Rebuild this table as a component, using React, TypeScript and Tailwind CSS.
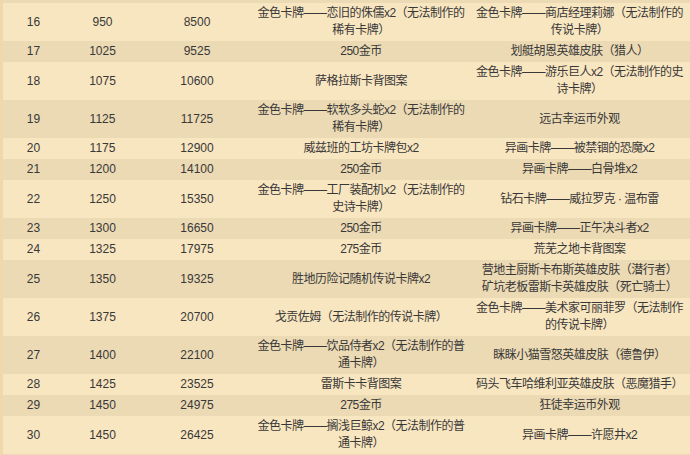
type Row = {
    level: number
    exp: number
    total: number
    free: string[]
    paid: string[]
}

const rows: Row[] = [
    { level: 16, exp: 950, total: 8500, free: ["金色卡牌——恋旧的侏儒x2（无法制作的", "稀有卡牌）"], paid: ["金色卡牌——商店经理莉娜（无法制作的", "传说卡牌）"] },
    { level: 17, exp: 1025, total: 9525, free: ["250金币"], paid: ["划艇胡恩英雄皮肤（猎人）"] },
    { level: 18, exp: 1075, total: 10600, free: ["萨格拉斯卡背图案"], paid: ["金色卡牌——游乐巨人x2（无法制作的史", "诗卡牌）"] },
    { level: 19, exp: 1125, total: 11725, free: ["金色卡牌——软软多头蛇x2（无法制作的", "稀有卡牌）"], paid: ["远古幸运币外观"] },
    { level: 20, exp: 1175, total: 12900, free: ["威兹班的工坊卡牌包x2"], paid: ["异画卡牌——被禁锢的恐魔x2"] },
    { level: 21, exp: 1200, total: 14100, free: ["250金币"], paid: ["异画卡牌——白骨堆x2"] },
    { level: 22, exp: 1250, total: 15350, free: ["金色卡牌——工厂装配机x2（无法制作的", "史诗卡牌）"], paid: ["钻石卡牌——威拉罗克 · 温布雷"] },
    { level: 23, exp: 1300, total: 16650, free: ["250金币"], paid: ["异画卡牌——正午决斗者x2"] },
    { level: 24, exp: 1325, total: 17975, free: ["275金币"], paid: ["荒芜之地卡背图案"] },
    { level: 25, exp: 1350, total: 19325, free: ["胜地历险记随机传说卡牌x2"], paid: ["营地主厨斯卡布斯英雄皮肤（潜行者）", "矿坑老板雷斯卡英雄皮肤（死亡骑士）"] },
    { level: 26, exp: 1375, total: 20700, free: ["戈贡佐姆（无法制作的传说卡牌）"], paid: ["金色卡牌——美术家可丽菲罗（无法制作", "的传说卡牌）"] },
    { level: 27, exp: 1400, total: 22100, free: ["金色卡牌——饮品侍者x2（无法制作的普", "通卡牌）"], paid: ["眯眯小猫雪怒英雄皮肤（德鲁伊）"] },
    { level: 28, exp: 1425, total: 23525, free: ["雷斯卡卡背图案"], paid: ["码头飞车哈维利亚英雄皮肤（恶魔猎手）"] },
    { level: 29, exp: 1450, total: 24975, free: ["275金币"], paid: ["狂徒幸运币外观"] },
    { level: 30, exp: 1450, total: 26425, free: ["金色卡牌——搁浅巨鲸x2（无法制作的普", "通卡牌）"], paid: ["异画卡牌——许愿井x2"] },
]

function Lines({ lines }: { lines: string[] }) {
    return (
        <div className="flex flex-col items-center tracking-[-0.5px]">
            {lines.map((l, i) => (
                <span key={i} className="whitespace-nowrap">{l}</span>
            ))}
        </div>
    )
}

export default function App() {
    return (
        <div
            className="w-[690px] h-[455px] overflow-hidden bg-[#ecdab4] border-l-[3px] border-[#efd8ab] pt-[3px] text-[12px] leading-[17px] text-[#383838]"
            style={{ fontFamily: '"Liberation Sans", "Noto Sans CJK SC", sans-serif' }}
        >
            {rows.map((r, i) => (
                <div
                    key={r.level}
                    className={`grid grid-cols-[61px_77px_112px_216px_1fr] items-center text-center py-[2px] ${
                        i % 2 === 0 ? "bg-[#f8e6c0]" : "bg-[#ecdab4]"
                    }`}
                >
                    <div>{r.level}</div>
                    <div>{r.exp}</div>
                    <div>{r.total}</div>
                    <Lines lines={r.free} />
                    <Lines lines={r.paid} />
                </div>
            ))}
        </div>
    )
}
